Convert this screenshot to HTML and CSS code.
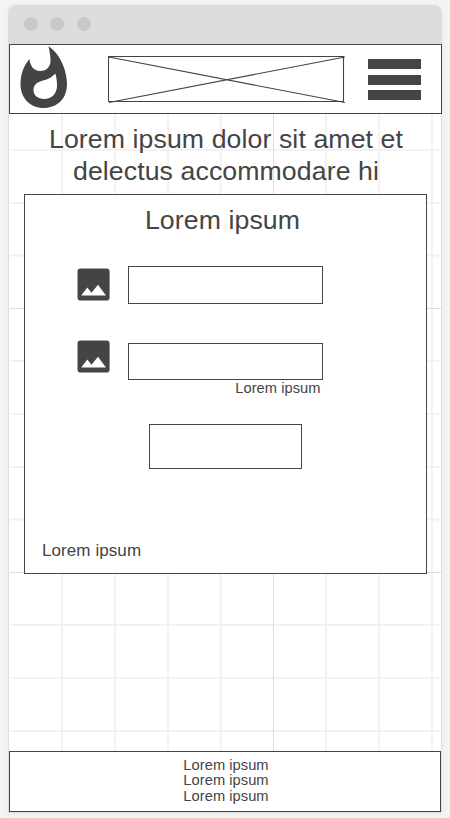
FILE: index.html
```html
<!DOCTYPE html>
<html lang="en">
<head>
<meta charset="utf-8">
<title>Lorem ipsum</title>
<link rel="stylesheet" href="styles.css">
</head>
<body>
<div class="window">
  <div class="titlebar"><i class="dot"></i><i class="dot"></i><i class="dot"></i></div>
  <div class="screen">
    <svg class="grid" width="432" height="768" viewBox="9 44 432 768">
      <path class="minor" d="M62 44V812M115 44V812M168 44V812M220.6 44V812M326.2 44V812M379 44V812M432 44V812M10 150H442M10 203H442M10 255.5H442M10 361H442M10 414H442M10 467H442M10 519.5H442M10 625H442M10 678H442M10 731H442"/>
      <path class="major" d="M273.5 44V812M10 308.5H442M10 572.5H442"/>
    </svg>
    <header class="header">
      <svg class="flame" width="47" height="63" viewBox="20 46 47 63"><path d="M48.5 46.2C58 52 67 68 67 84C67 99 57 108 43.6 108C30 108 20.5 98 20.5 84C20.5 74 24 65 29.5 59C30 66 34 71 40 71C47 71 51 66.500 50.500 59C50.200 54 49.300 50 48.500 46.200ZM55.300 73.600C52 77.500 48 79.400 43 80.500C37 82 33.500 85 33.500 90C33.500 95.500 38 99 44 99C52 99 57 93 57 86C57 81 56.500 77 55.300 73.600Z"/></svg>
      <svg class="banner" width="238" height="48" viewBox="108 56 238 48"><path d="M108.500 56.500H343.500V101.500H108.500ZM109 57L345 102.500M109 102.500L345 57"/></svg>
      <div class="menu"><i></i><i></i><i></i></div>
    </header>
    <h1 class="title">Lorem ipsum dolor sit amet et<br>delectus accommodare hi</h1>
    <main class="card">
      <h2 class="subtitle">Lorem ipsum</h2>
      <div class="field">
        <svg class="picture" width="33" height="33" viewBox="0 0 33 33"><path fill-rule="evenodd" d="M3.500.5H29.500Q32.600.5 32.600 3.700V29.400Q32.600 32.500 29.500 32.500H3.500Q.500 32.500.500 29.400V3.700Q.500.500 3.500.500ZM4.200 27.500H29L21 16.800L14.500 24.800L10.300 19.500Z"/></svg>
        <div class="input"></div>
      </div>
      <div class="field second">
        <svg class="picture" width="33" height="33" viewBox="0 0 33 33"><path fill-rule="evenodd" d="M3.500.5H29.500Q32.600.5 32.600 3.700V29.400Q32.600 32.500 29.500 32.500H3.500Q.500 32.500.500 29.400V3.700Q.500.500 3.500.500ZM4.200 27.500H29L21 16.800L14.500 24.800L10.300 19.500Z"/></svg>
        <div class="input short"></div>
      </div>
      <div class="hint">Lorem ipsum</div>
      <div class="button"></div>
      <div class="note">Lorem ipsum</div>
    </main>
    <footer class="footer"><div>Lorem ipsum</div><div>Lorem ipsum</div><div>Lorem ipsum</div></footer>
  </div>
</div>
</body>
</html>
```
FILE: styles.css
```css
* { box-sizing: border-box; }
body {
  margin: 0;
  height: 818px;
  padding: 5px 8px 0;
  overflow: hidden;
  background: #f4f4f4;
  color: #444;
  font-family: "Liberation Sans", Arial, sans-serif;
}
.window {
  height: 808px;
  border: 1px solid #ddd;
  border-top: 0;
  border-radius: 8px 8px 0 0;
  background: #fff;
  box-shadow: 0 1px 10px rgba(0, 0, 0, .05);
}
.titlebar {
  height: 39px;
  margin: 0 -1px;
  padding: 12px 0 0 16px;
  display: flex;
  gap: 12.400px;
  background: #ddd;
  border-radius: 8px 8px 0 0;
}
.dot { width: 14px; height: 14px; border-radius: 50%; background: #c9c9c9; }
.screen {
  position: relative;
  height: 768px;
  display: flex;
  flex-direction: column;
}
.grid { position: absolute; left: 0; top: 0; }
.minor, .major { fill: none; }
.minor { stroke: #f2f2f2; stroke-width: 2; }
.major { stroke: #ddd; stroke-width: 1; }
.header, .title, .card, .footer { position: relative; }
.header {
  flex: none;
  width: 433px;
  height: 70px;
  border: 1px solid #444;
  background: #fff;
  display: flex;
  align-items: flex-start;
}
.flame { margin: 1px 0 0 10px; fill: #444; }
.banner { margin: 11px 0 0 41px; fill: none; stroke: #444; stroke-width: 1.100; }
.menu { margin: 14px 0 0 22px; width: 53px; display: grid; grid-template-rows: 10px 10px 10px; row-gap: 5.500px; }
.menu i { background: #444; }
.title, .subtitle { margin: 0; font-size: 26.670px; font-weight: 400; letter-spacing: .100px; text-align: center; }
.title { padding: 9px 0 0 2px; line-height: 32px; height: 80px; white-space: nowrap; }
.card {
  width: 403px;
  height: 380px;
  margin-left: 15px;
  border: 1px solid #444;
  background: #fff;
  display: flex;
  flex-direction: column;
}
.subtitle { height: 71px; padding-top: 9px; line-height: 32px; padding-right: 6px; }
.field { display: flex; height: 77px; padding-left: 52px; gap: 18px; }
.picture { margin-top: 2px; fill: #444; }
.input { width: 195px; height: 38px; border: 1px solid #444; }
.field.second { height: 37px; }
.second .picture { margin-top: -3px; }
.input.short { height: 37px; }
.hint { width: 295.500px; height: 44px; text-align: right; font-size: 14.670px; line-height: 17px; letter-spacing: .050px; }
.button { width: 153px; height: 45px; margin-left: 124px; border: 1px solid #444; }
.note { margin: 72px 0 0 17px; font-size: 17px; line-height: 20px; letter-spacing: .080px; }
.footer {
  width: 432px;
  height: 61px;
  margin-top: auto;
  border: 1px solid #444;
  background: #fff;
  padding: 5.500px 0 0 2px;
  text-align: center;
  font-size: 14.670px;
  line-height: 15.500px;
  letter-spacing: .050px;
}
```
